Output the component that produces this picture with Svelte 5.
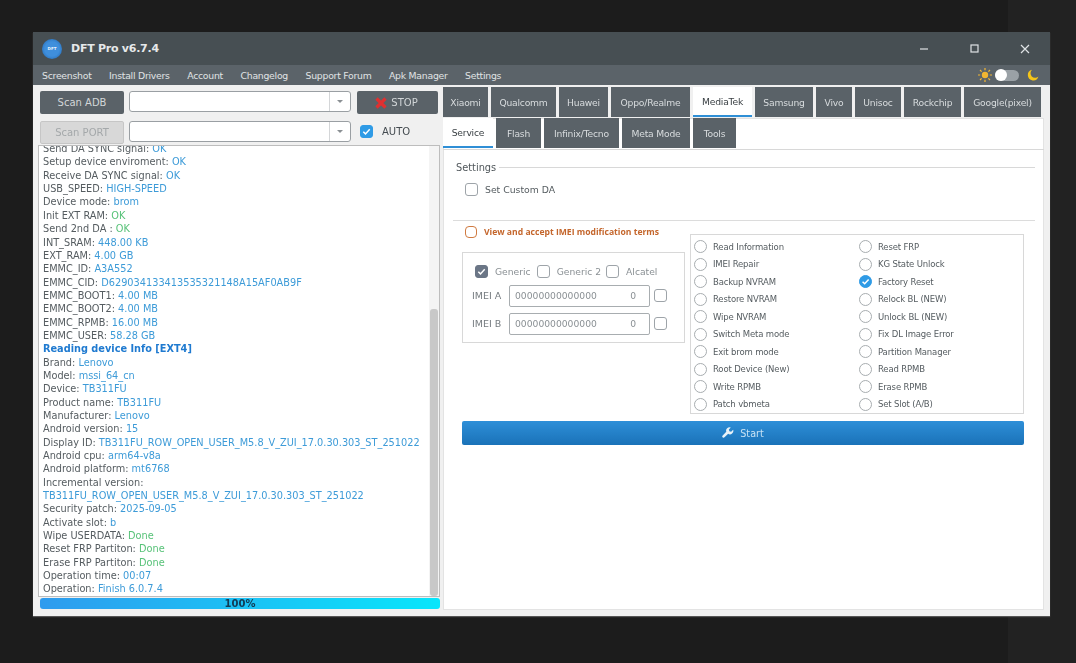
<script>
  const menu = ['Screenshot', 'Install Drivers', 'Account', 'Changelog', 'Support Forum', 'Apk Manager', 'Settings'];
  const brands = ['Xiaomi', 'Qualcomm', 'Huawei', 'Oppo/Realme', 'MediaTek', 'Samsung', 'Vivo', 'Unisoc', 'Rockchip', 'Google(pixel)'];
  const subs = ['Service', 'Flash', 'Infinix/Tecno', 'Meta Mode', 'Tools'];
  const log = [
    ['Send DA SYNC signal:', 'OK', 'blue'],
    ['Setup device enviroment:', 'OK', 'blue'],
    ['Receive DA SYNC signal:', 'OK', 'blue'],
    ['USB_SPEED:', 'HIGH-SPEED', 'blue'],
    ['Device mode:', 'brom', 'blue'],
    ['Init EXT RAM:', 'OK', 'green'],
    ['Send 2nd DA :', 'OK', 'green'],
    ['INT_SRAM:', '448.00 KB', 'blue'],
    ['EXT_RAM:', '4.00 GB', 'blue'],
    ['EMMC_ID:', 'A3A552', 'blue'],
    ['EMMC_CID:', 'D629034133413535321148A15AF0AB9F', 'blue'],
    ['EMMC_BOOT1:', '4.00 MB', 'blue'],
    ['EMMC_BOOT2:', '4.00 MB', 'blue'],
    ['EMMC_RPMB:', '16.00 MB', 'blue'],
    ['EMMC_USER:', '58.28 GB', 'blue'],
    ['', 'Reading device Info [EXT4]', 'head'],
    ['Brand:', 'Lenovo', 'blue'],
    ['Model:', 'mssi_64_cn', 'blue'],
    ['Device:', 'TB311FU', 'blue'],
    ['Product name:', 'TB311FU', 'blue'],
    ['Manufacturer:', 'Lenovo', 'blue'],
    ['Android version:', '15', 'blue'],
    ['Display ID:', 'TB311FU_ROW_OPEN_USER_M5.8_V_ZUI_17.0.30.303_ST_251022', 'blue'],
    ['Android cpu:', 'arm64-v8a', 'blue'],
    ['Android platform:', 'mt6768', 'blue'],
    ['Incremental version:', '', 'blue'],
    ['', 'TB311FU_ROW_OPEN_USER_M5.8_V_ZUI_17.0.30.303_ST_251022', 'blue'],
    ['Security patch:', '2025-09-05', 'blue'],
    ['Activate slot:', 'b', 'blue'],
    ['Wipe USERDATA:', 'Done', 'green'],
    ['Reset FRP Partiton:', 'Done', 'green'],
    ['Erase FRP Partiton:', 'Done', 'green'],
    ['Operation time:', '00:07', 'blue'],
    ['Operation:', 'Finish 6.0.7.4', 'blue']
  ];
  const radios = [
    'Read Information', 'Reset FRP',
    'IMEI Repair', 'KG State Unlock',
    'Backup NVRAM', 'Factory Reset',
    'Restore NVRAM', 'Relock BL (NEW)',
    'Wipe NVRAM', 'Unlock BL (NEW)',
    'Switch Meta mode', 'Fix DL Image Error',
    'Exit brom mode', 'Partition Manager',
    'Root Device (New)', 'Read RPMB',
    'Write RPMB', 'Erase RPMB',
    'Patch vbmeta', 'Set Slot (A/B)'
  ];
</script>

<div class="page">
  <div class="window">
    <header class="title">
      <span class="logo"><span>DFT</span></span>
      <span class="name">DFT Pro v6.7.4</span>
      <span class="controls">
        <svg viewBox="0 0 50 12" class="ctl min"><path d="M0 6h8" /></svg>
        <svg viewBox="0 0 10 10" class="ctl box"><rect x="1" y="1" width="7" height="7" /></svg>
        <svg viewBox="0 0 10 10" class="ctl close"><path d="M1 1l8 8M9 1l-8 8" /></svg>
      </span>
    </header>
    <nav class="menu">
      {#each menu as m}<span>{m}</span>{/each}
      <span class="theme">
        <svg viewBox="0 0 14 14" class="sun">
          <circle cx="7" cy="7" r="3.2" />
          <path d="M7 0v2.2M7 11.8V14M0 7h2.2M11.8 7H14M2 2l1.6 1.6M10.4 10.4L12 12M12 2l-1.6 1.6M3.6 10.4L2 12" />
        </svg>
        <span class="toggle"><span class="knob"></span></span>
        <svg viewBox="0 0 12 12" class="moon"><path d="M5 .8a5.4 5.4 0 1 0 6.4 6.8A4.6 4.6 0 0 1 5 .8z" /></svg>
      </span>
    </nav>
    <div class="body">
      <section class="left">
        <div class="controls-grid">
          <button class="btn">Scan ADB</button>
          <div class="combo"><span class="arrow"></span></div>
          <button class="btn stop">
            <svg viewBox="0 0 12 12" class="x"><path d="M1.5 1.5l9 9M10.5 1.5l-9 9" /></svg>STOP
          </button>
          <button class="btn disabled">Scan PORT</button>
          <div class="combo"><span class="arrow"></span></div>
          <div class="auto">
            <span class="check on"><svg viewBox="0 0 12 12"><path d="M2.5 6.2l2.4 2.4 4.600-5" /></svg></span>
            <span>AUTO</span>
          </div>
        </div>
        <div class="log">
          <div class="lines">
            {#each log as [label, value, cls]}
              <div class="line">{label}{label ? ' ' : ''}<span class={cls}>{value}</span></div>
            {/each}
          </div>
          <div class="track"><div class="thumb"></div></div>
        </div>
        <div class="progress">100%</div>
      </section>

      <section class="right">
        <div class="tabs brands">
          {#each brands as b}<div class="tab" class:active={b === 'MediaTek'}>{b}</div>{/each}
        </div>
        <div class="sheet">
          <div class="tabs subs">
            {#each subs as s}<div class="tab" class:active={s === 'Service'}>{s}</div>{/each}
          </div>
          <div class="panel">
            <div class="legend"><span>Settings</span><i></i></div>
            <label class="custom"><span class="check"></span>Set Custom DA</label>
            <hr />
            <div class="terms"><span class="check orange"></span><b>View and accept IMEI modification terms</b></div>
            <div class="service">
              <div class="imei">
                <div class="types">
                  <span class="check grey"><svg viewBox="0 0 12 12"><path d="M2.5 6.2l2.4 2.4 4.600-5" /></svg></span><span class="t1">Generic</span>
                  <span class="check"></span><span class="t2">Generic 2</span>
                  <span class="check"></span><span class="t3">Alcatel</span>
                </div>
                <div class="imei-row">
                  <span class="lab">IMEI A</span>
                  <div class="field"><span>00000000000000</span><span>0</span></div>
                  <span class="check"></span>
                </div>
                <div class="imei-row">
                  <span class="lab">IMEI B</span>
                  <div class="field"><span>00000000000000</span><span>0</span></div>
                  <span class="check"></span>
                </div>
              </div>
              <div class="radios">
                {#each radios as r}
                  <div class="radio">
                    {#if r === 'Factory Reset'}
                      <span class="dot on"><svg viewBox="0 0 12 12"><path d="M2.8 6.2l2.3 2.3 4.300-4.800" /></svg></span>
                    {:else}
                      <span class="dot"></span>
                    {/if}
                    <span>{r}</span>
                  </div>
                {/each}
              </div>
            </div>
            <button class="start">
              <svg viewBox="0 0 14 14" class="wrench"><path d="M13 3.2l-2.400 2.300-2-.6-.6-2L10.300.6A4 4 0 0 0 5 5.600L.8 9.800a1.500 1.500 0 0 0 2.100 2.300L7.200 8A4 4 0 0 0 13 3.200z" /></svg>
              Start
            </button>
          </div>
        </div>
      </section>
    </div>
  </div>
</div>

<style>
  :global(body) {
    margin: 0;
    background: linear-gradient(to right, #1c1c1c 1008px, #222222 1008px);
  }
  .page {
    width: 1076px;
    height: 663px;
    padding: 32px 0 0 33px;
    box-sizing: border-box;
    overflow: hidden;
  }
  .window {
    width: 1017px;
    height: 584px;
    background: #f0f0f0;
    display: flex;
    flex-direction: column;
    font-family: "DejaVu Sans", sans-serif;
    font-size: 10px;
    color: #555c60;
    filter: blur(0.5px);
    box-shadow: 0 1px 1px #555;
  }
  .title {
    height: 33px;
    flex: none;
    background: #474f53;
    display: flex;
    align-items: center;
    padding-left: 9px;
    color: #e6e9ea;
  }
  .logo {
    width: 20px;
    height: 20px;
    border-radius: 50%;
    background: radial-gradient(circle, #3f8fdc 0 50%, #1b5fa8 100%);
    display: flex;
    align-items: center;
    justify-content: center;
    font-size: 4px;
    font-weight: 700;
    color: #e8f2fb;
  }
  .name {
    margin-left: 9px;
    font-size: 11px;
    font-weight: 700;
    letter-spacing: -0.25px;
  }
  .controls {
    margin-left: auto;
    display: flex;
    align-items: center;
  }
  .ctl {
    fill: none;
    stroke: #dfe3e5;
    stroke-width: 1.2;
  }
  .min { width: 50px; height: 12px; }
  .box { width: 10px; height: 10px; margin-right: 40px; }
  .close { width: 10px; height: 10px; margin-right: 20px; }
  .menu {
    height: 20px;
    flex: none;
    background: #5b6369;
    color: #e0e3e5;
    display: flex;
    align-items: center;
    padding-left: 9px;
    gap: 17.5px;
    font-size: 9.3px;
    letter-spacing: -0.25px;
  }
  .theme {
    margin-left: auto;
    display: flex;
    align-items: center;
    margin-right: 11px;
  }
  .sun { width: 14px; height: 14px; margin-right: 3px; }
  .sun circle { fill: #f2b632; }
  .sun path { stroke: #f2b632; stroke-width: 1.2; fill: none; }
  .toggle {
    width: 24px;
    height: 11px;
    border-radius: 6px;
    background: #9aa1a6;
    position: relative;
    margin-right: 8px;
  }
  .knob {
    position: absolute;
    left: 0;
    top: -0.5px;
    width: 12px;
    height: 12px;
    border-radius: 50%;
    background: #fff;
  }
  .moon { width: 12px; height: 12px; fill: #f5c518; }
  .body {
    flex: 1;
    display: flex;
    min-height: 0;
  }
  .left {
    width: 410px;
    flex: none;
    box-sizing: border-box;
    padding: 6px 3px 0 5px;
    display: flex;
    flex-direction: column;
  }
  .controls-grid {
    display: grid;
    grid-template-columns: 84px 222px 82px;
    column-gap: 5px;
    row-gap: 7px;
    padding-left: 2px;
    grid-auto-rows: 23px;
    align-items: start;
  }
  .btn {
    height: 23px;
    padding: 0;
    border: 0;
    border-radius: 2px;
    background: #5a6268;
    color: #d2d6d8;
    font: inherit;
    font-size: 10px;
    display: flex;
    align-items: center;
    justify-content: center;
  }
  .btn.disabled {
    background: #d8d8d8;
    color: #a4a8aa;
    border: 1px solid #c6c6c6;
    box-sizing: border-box;
  }
  .stop { gap: 4px; margin-left: 1px; padding-right: 2px; }
  .x { width: 12px; height: 12px; fill: none; stroke: #e03030; stroke-width: 3.2; }
  .combo {
    height: 19px;
    background: #fff;
    border: 1px solid #9a9fa3;
    border-radius: 3px;
    position: relative;
  }
  .arrow {
    position: absolute;
    right: 0;
    top: 0;
    bottom: 0;
    width: 20px;
    border-left: 1px solid #d4d6d8;
  }
  .arrow::after {
    content: "";
    position: absolute;
    left: 7px;
    top: 8px;
    border: 3px solid transparent;
    border-top: 3px solid #8a8f93;
    border-bottom: 0;
  }
  .auto {
    display: flex;
    align-items: center;
    gap: 9px;
    height: 21px;
    padding-left: 4px;
    font-size: 10px;
    color: #444b50;
  }
  .check {
    width: 11px;
    height: 11px;
    border: 1px solid #9ea4a9;
    border-radius: 3px;
    background: #fff;
    display: inline-flex;
    flex: none;
  }
  .check svg, .dot svg {
    width: 100%;
    height: 100%;
    fill: none;
    stroke: #fff;
    stroke-width: 1.6;
  }
  .check.on { background: #2f9be6; border-color: #2f9be6; }
  .check.grey { background: #6b7686; border-color: #6b7686; }
  .check.orange { border: 1.5px solid #d07a40; width: 10px; height: 10px; border-radius: 4px; }
  .log {
    margin-top: 1px;
    height: 452px;
    box-sizing: border-box;
    border: 1px solid #bdbdbd;
    background: #fff;
    display: flex;
    overflow: hidden;
  }
  .lines {
    flex: 1;
    margin-top: -3.9px;
    padding-left: 4px;
    font-size: 9.75px;
    line-height: 13.34px;
    color: #555c60;
    white-space: nowrap;
    min-width: 0;
  }
  .blue { color: #3d9bd8; }
  .green { color: #57c278; }
  .head { color: #1f7ad0; font-weight: 700; }
  .track {
    width: 10px;
    flex: none;
    position: relative;
    background: #f4f4f4;
  }
  .thumb {
    position: absolute;
    left: 1px;
    right: 1px;
    top: 163px;
    bottom: 0;
    background: #c8c8c8;
    border-radius: 3px;
  }
  .progress {
    margin: 1px 0 0 2px;
    width: 400px;
    height: 11px;
    border-radius: 3px;
    background: linear-gradient(to right, #2f9bee, #08e6fb);
    color: #113b55;
    font-size: 10px;
    line-height: 12px;
    font-weight: 700;
    text-align: center;
  }
  .right {
    flex: 1;
    min-width: 0;
    padding: 2px 6px 6px 0;
    display: flex;
    flex-direction: column;
  }
  .tabs { display: grid; gap: 3px; }
  .brands {
    grid-template-columns: 45px 65px 49px 79px 59px 58px 36px 46px 57px 77px;
    height: 30px;
  }
  .subs {
    grid-template-columns: 50px 45px 75px 68px 43px;
    height: 30px;
  }
  .tab {
    background: #5a6268;
    color: #d8dcde;
    font-size: 9.2px;
    letter-spacing: -0.2px;
    display: flex;
    align-items: center;
    justify-content: center;
    box-sizing: border-box;
    white-space: nowrap;
  }
  .tab.active {
    background: #fff;
    color: #3b4145;
    border-bottom: 2px solid #2f8fd6;
  }
  .sheet {
    flex: 1;
    margin-top: 1px;
    background: #fff;
    display: flex;
    flex-direction: column;
    min-height: 0;
    box-shadow: inset 0 0 0 1px #e3e3e3;
  }
  .panel {
    flex: 1;
    margin-top: 1px;
    border-top: 1px solid #d8d8d8;
    padding: 0 9px 0 10px;
    position: relative;
  }
  .legend {
    display: flex;
    align-items: center;
    gap: 3px;
    margin: 10px 0 0 3px;
    height: 14px;
    font-size: 9.8px;
    color: #4f565a;
  }
  .legend i { flex: 1; height: 1px; background: #d8d8d8; }
  .custom {
    display: flex;
    align-items: center;
    gap: 7px;
    margin: 9px 0 0 12px;
    height: 13px;
    font-size: 9.3px;
    color: #555c60;
  }
  hr {
    border: 0;
    height: 1px;
    background: #dcdcdc;
    margin: 24px 0 0 0;
  }
  .terms {
    display: flex;
    align-items: center;
    gap: 7px;
    margin: 4px 0 0 12px;
    height: 13px;
  }
  .terms b {
    font-family: "Open Sans", sans-serif;
    font-size: 8.6px;
    font-weight: 700;
    color: #c4662c;
  }
  .service {
    display: flex;
    align-items: flex-start;
    margin-left: 9px;
    margin-top: -4px;
  }
  .imei {
    margin-top: 18px;
    width: 223px;
    height: 91px;
    box-sizing: border-box;
    border: 1px solid #d8d8d8;
    padding: 12px 0 0 9px;
    color: #8a9094;
    font-size: 9.2px;
  }
  .types {
    display: flex;
    align-items: center;
    height: 13px;
    padding-left: 3px;
  }
  .t1 { margin: 0 6px 0 7px; }
  .t2 { margin: 0 5px 0 7px; }
  .t3 { margin-left: 7px; }
  .imei-row {
    display: flex;
    align-items: center;
    margin-top: 6px;
    height: 23px;
  }
  .imei-row + .imei-row { margin-top: 5px; }
  .lab { width: 37px; flex: none; color: #767c80; font-size: 9.5px; }
  .field {
    width: 141px;
    height: 22px;
    box-sizing: border-box;
    border: 1px solid #a8adb0;
    border-radius: 2px;
    background: #fff;
    display: flex;
    align-items: center;
    justify-content: space-between;
    padding: 0 13px 0 5px;
    color: #8a9094;
    margin-right: 4px;
    font-size: 9.2px;
  }
  .radios {
    margin-left: 5px;
    width: 334px;
    height: 180px;
    box-sizing: border-box;
    border: 1px solid #d8d8d8;
    padding: 3px 0 0 3px;
    display: grid;
    grid-template-columns: 165px 1fr;
    grid-auto-rows: 17.5px;
  }
  .radio {
    display: flex;
    align-items: center;
    gap: 6px;
    font-size: 8.5px;
    letter-spacing: -0.15px;
    color: #555c60;
    white-space: nowrap;
  }
  .dot {
    width: 11px;
    height: 11px;
    border: 1px solid #a8adb0;
    border-radius: 50%;
    display: inline-flex;
    flex: none;
    background: #fff;
  }
  .dot.on { background: #2f9be6; border-color: #2f9be6; }
  .start {
    display: flex;
    align-items: center;
    justify-content: center;
    gap: 6px;
    margin: 7px 0 0 9px;
    width: 562px;
    height: 24px;
    padding: 0;
    border: 0;
    border-radius: 2px;
    background: linear-gradient(#2e8fd8, #1a72b8);
    color: #c8e2f4;
    font: inherit;
    font-size: 9.6px;
  }
  .wrench { width: 12px; height: 12px; fill: #e8f2f8; }
</style>
